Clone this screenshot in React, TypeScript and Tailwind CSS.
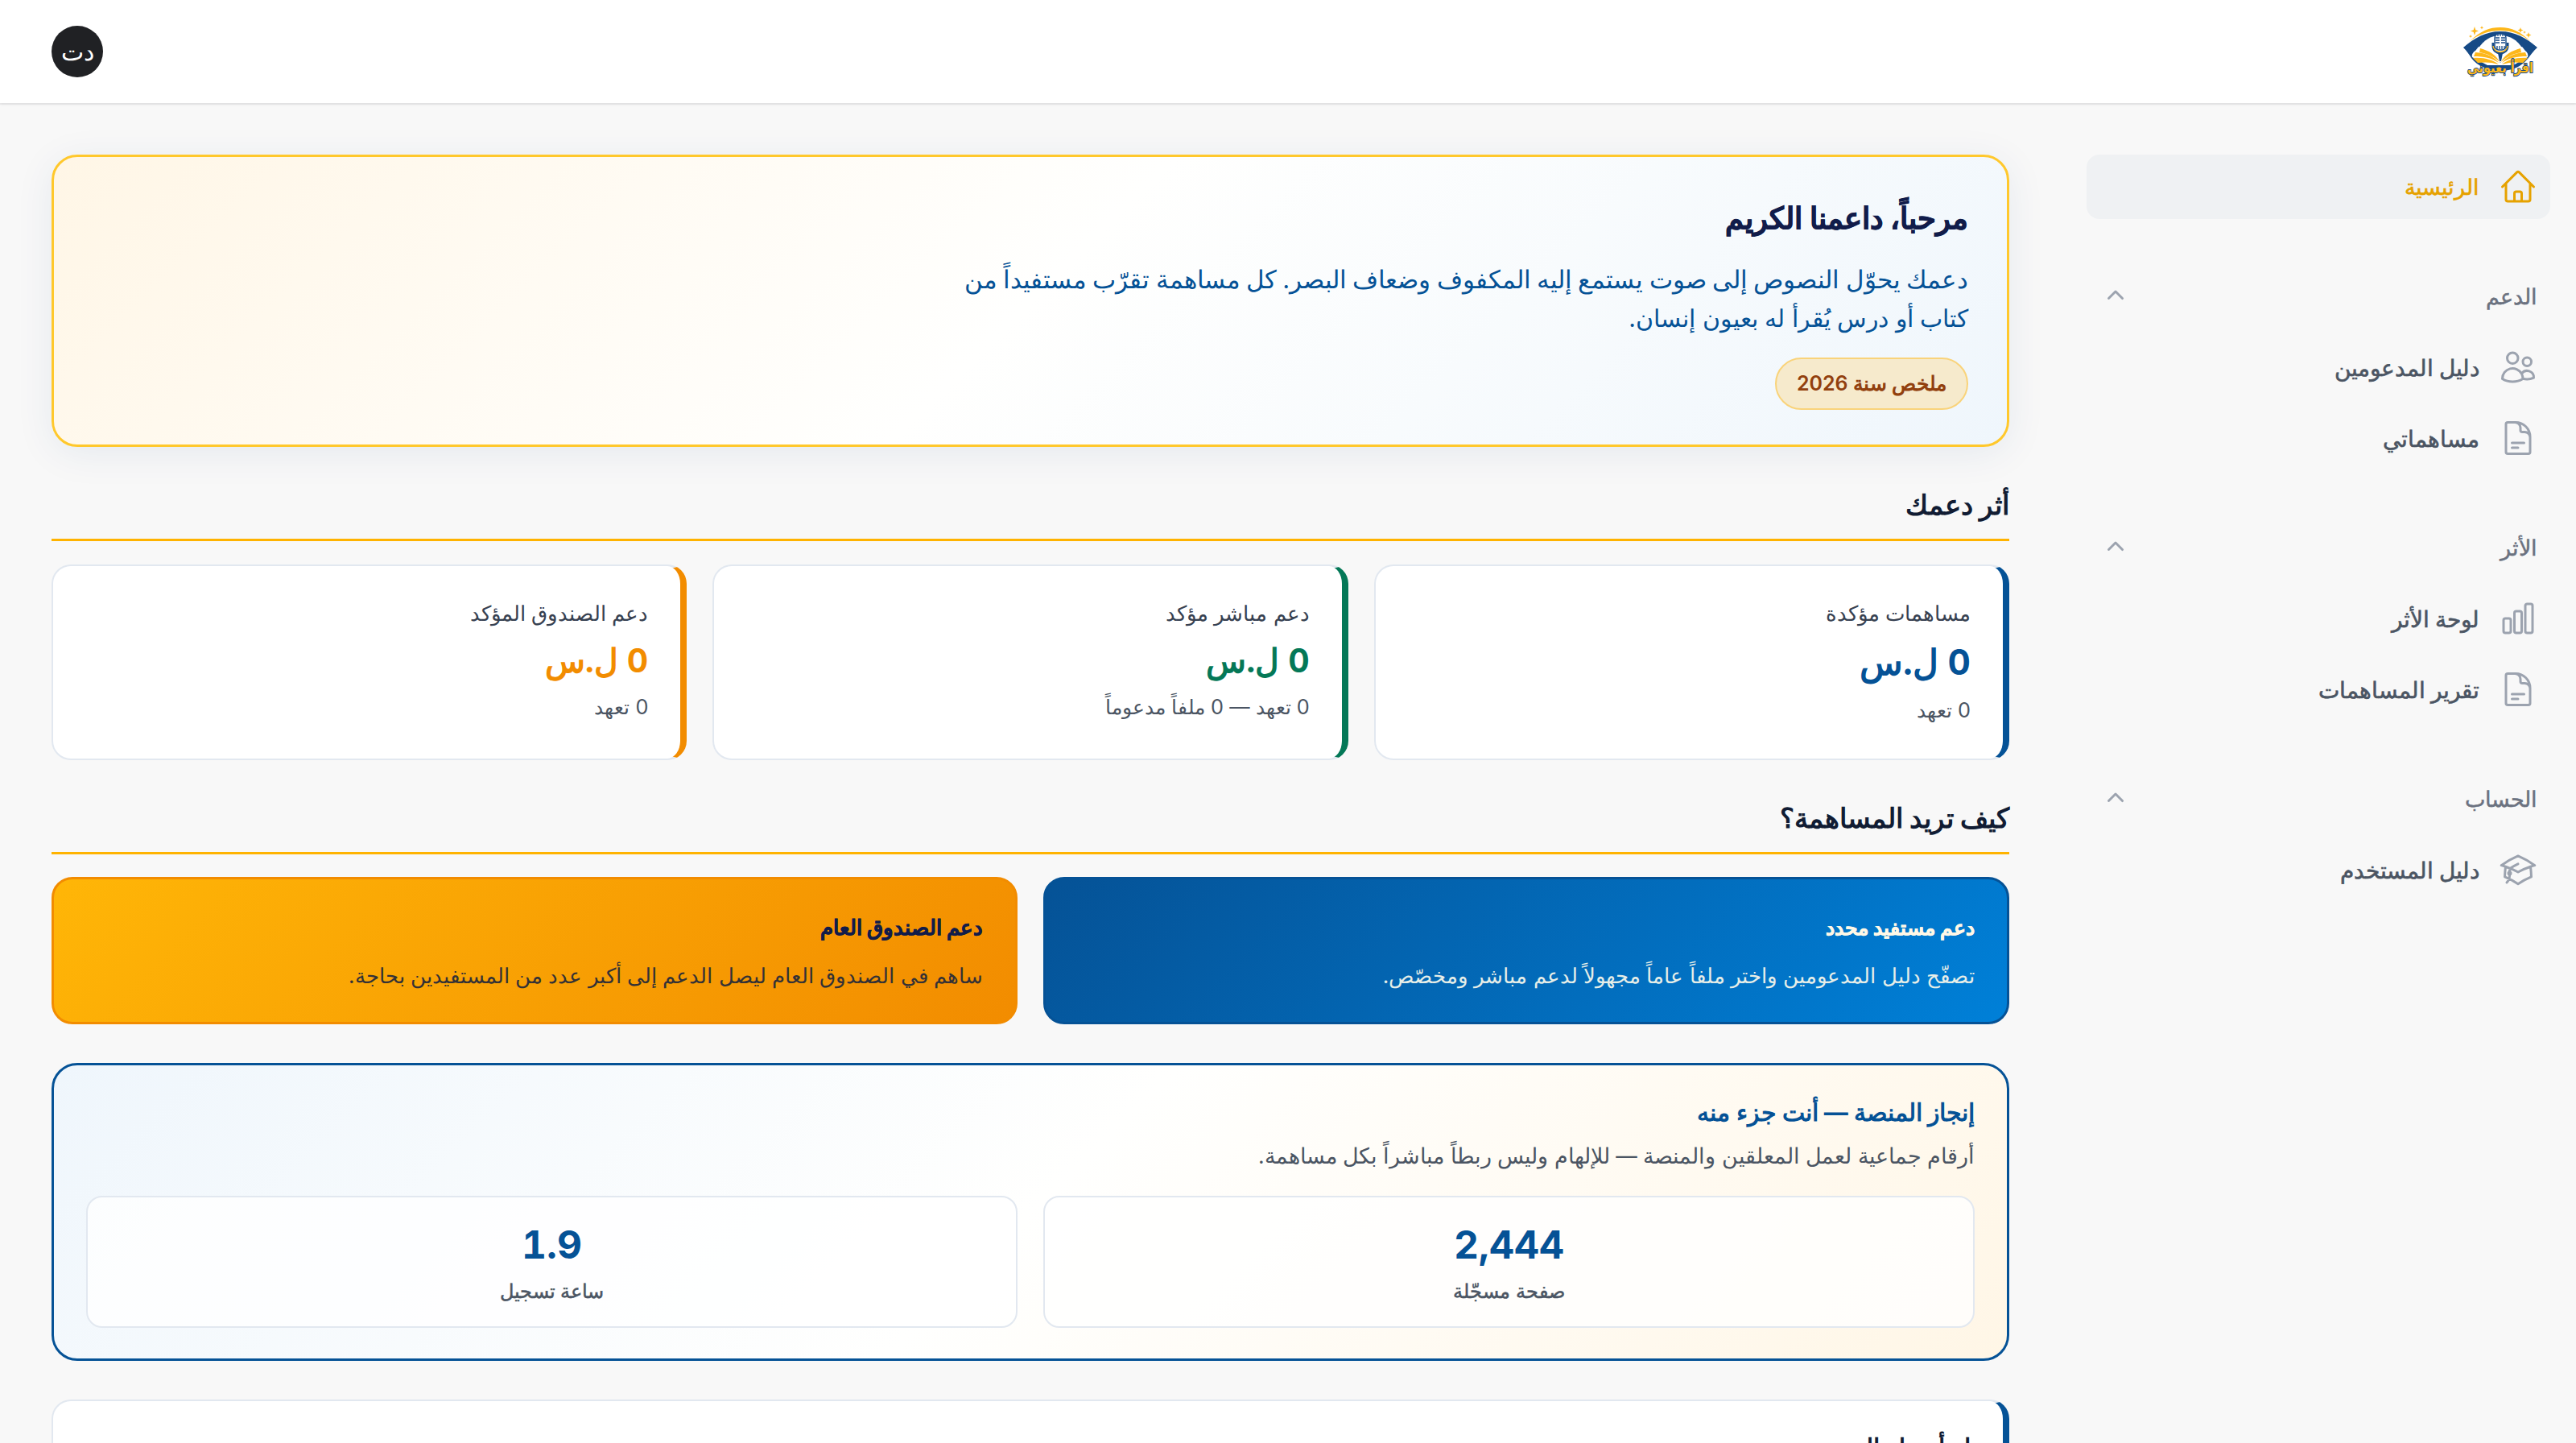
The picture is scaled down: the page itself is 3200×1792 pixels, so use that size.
import clsx from 'clsx';
import type { FC, ReactNode } from 'react';
import type { IconType } from 'react-icons';
import {
	HiMiniChevronUp,
	HiOutlineAcademicCap,
	HiOutlineChartBar,
	HiOutlineDocumentText,
	HiOutlineHome,
	HiOutlineUsers,
} from 'react-icons/hi2';

interface NavItem {
	label: string;
	icon: IconType;
	active?: boolean;
}

interface NavGroup {
	label: string;
	items: NavItem[];
}

const GROUPS: NavGroup[] = [
	{
		label: 'الدعم',
		items: [
			{ label: 'دليل المدعومين', icon: HiOutlineUsers },
			{ label: 'مساهماتي', icon: HiOutlineDocumentText },
		],
	},
	{
		label: 'الأثر',
		items: [
			{ label: 'لوحة الأثر', icon: HiOutlineChartBar },
			{ label: 'تقرير المساهمات', icon: HiOutlineDocumentText },
		],
	},
	{
		label: 'الحساب',
		items: [{ label: 'دليل المستخدم', icon: HiOutlineAcademicCap }],
	},
];

interface Metric {
	label: string;
	value: string;
	note: string;
	border: string;
	color: string;
}

const METRICS: Metric[] = [
	{
		label: 'مساهمات مؤكدة',
		value: '0 ل.س',
		note: '0 تعهد',
		border: 'border-r-[#055296]',
		color: 'text-[#055296] text-[44px] leading-[62px]',
	},
	{
		label: 'دعم مباشر مؤكد',
		value: '0 ل.س',
		note: '0 تعهد — 0 ملفاً مدعوماً',
		border: 'border-r-[#047857]',
		color: 'text-[#047857] text-[41px] leading-[58px]',
	},
	{
		label: 'دعم الصندوق المؤكد',
		value: '0 ل.س',
		note: '0 تعهد',
		border: 'border-r-[#f28c00]',
		color: 'text-[#f28c00] text-[41px] leading-[58px]',
	},
];

const Logo: FC = () => (
	<svg viewBox="0 0 92 64" className="w-[92px] h-16 overflow-visible" aria-label="اقرأ بعيوني">
		<path d="M7 20C22 6 32 2 46 2s25 5 38 18C72 10 60 6 46 6S20 10 7 20Z" fill="#fdb71a" />
		<path d="M0 27C14 15 28 7 46 7s32 8 46 20c-5 4-8 9-12 14-8 10-20 15-34 15S17 50 10 40C7 35 4 31 0 27Z" fill="#164a86" />
		<path d="M18 29C26 17 35 12 46 12s21 5 28 17L62 45H30Z" fill="#fff" />
		<path d="M11 39c-1-4 2-7 4-8l4-5c12 4 22 9 27 20 5-11 15-16 27-20l4 5c3 2 4 5 3 8L62 49H30Z" fill="#fff" />
		<path d="M21 28c11 3 20 8 24 17-7-7-15-10-25-12ZM71 28c-11 3-20 8-24 17 7-7 15-10 25-12Z" fill="#fdb71a" />
		<path d="M15 33c14 1 23 5 29 13-9-6-18-8-31-8ZM77 33c-14 1-23 5-29 13 9-6 18-8 31-8Z" fill="#fdb71a" />
		<path d="M12 40c14-1 24 2 32 8-9-3-18-3-26-2ZM80 40c-14-1-24 2-32 8 9-3 18-3 26-2Z" fill="#fdb71a" />
		<path d="M37 21v4c0 12 18 12 18 0v-4" fill="none" stroke="#164a86" strokeWidth="3" />
		<path d="M37 25c1 10 17 10 18 0" fill="none" stroke="#fdb71a" strokeWidth="1.4" />
		<rect x="39" y="10" width="14" height="20" rx="5" fill="#fff" stroke="#164a86" strokeWidth="1.4" />
		<path d="M40 15h5m2 0h5M40 18h5m2 0h5M40 21h5m2 0h5M42 25v4m3-4v4m3-4v4m3-4v4M43 10v3m3-3v3m3-3v3" stroke="#164a86" strokeWidth="1.3" />
		<path d="M43 34h6l-2 10h-2Z" fill="#164a86" />
		<path d="m14 1 1.3 4.2L19 6.500l-3.700 1.300L14 12l-1.300-4.200L9 6.500l3.700-1.300ZM23 0l.6 1.700 1.700.6-1.700.6L23 4.500l-.6-1.600-1.700-.6 1.700-.6ZM9 11l.6 1.500 1.500.6-1.500.6L9 15l-.6-1.300-1.500-.6 1.500-.6ZM71 2l.9 2.600 2.600.9-2.600.9L71 9l-.9-2.600-2.600-.9 2.600-.9ZM81 8l.9 2.600 2.600.9-2.600.9L81 15l-.9-2.600-2.600-.9 2.600-.9ZM76 6l.5 1.500 1.500.5-1.500.5L76 10l-.5-1.500L74 8l1.500-.5Z" fill="#fdb71a" />
		<text
			x="46"
			y="58"
			textAnchor="middle"
			direction="rtl"
			textLength="82"
			lengthAdjust="spacingAndGlyphs"
			className="font-['DejaVu_Sans'] font-bold text-[17px]"
			fill="#fdb71a"
			stroke="#164a86"
			strokeWidth="2"
			strokeLinejoin="round"
			paintOrder="stroke"
		>
			اقرأ بعيوني
		</text>
	</svg>
);

const NavLink: FC<{ item: NavItem }> = ({ item }) => {
	const Icon = item.icon;
	return (
		<a
			className={clsx('flex items-center gap-6 h-20 px-4 rounded-2xl leading-[48px] font-medium', {
				'bg-[#eff1f3] text-[#e6a200] text-[27px]': item.active,
				'text-[#4b5563] text-[28px]': !item.active,
			})}
		>
			<Icon className={clsx('w-12 h-12 shrink-0', item.active ? 'text-[#e6a200]' : 'text-[#9ca3af]')} />
			<span className="whitespace-nowrap pt-0.5 [-webkit-text-stroke:0.6px]">{item.label}</span>
		</a>
	);
};

const Sidebar: FC = () => (
	<nav className="flex flex-col gap-14 w-[640px] shrink-0 pr-8 pl-8 pt-16">
		<NavLink item={{ label: 'الرئيسية', icon: HiOutlineHome, active: true }} />
		{GROUPS.map((group) => (
			<div key={group.label} className="flex flex-col gap-2">
				<div className="flex items-center justify-between h-20 px-4">
					<span className="pt-0.5 text-[27px] leading-[48px] font-medium text-[#6b7280] [-webkit-text-stroke:0.5px]">{group.label}</span>
					<HiMiniChevronUp className="w-10 h-10 text-[#9ca3af]" />
				</div>
				{group.items.map((item) => (
					<NavLink key={item.label} item={item} />
				))}
			</div>
		))}
	</nav>
);

const SectionTitle: FC<{ children: ReactNode }> = ({ children }) => (
	<h2 className="border-b-[3px] border-[#ffb300] text-[34px] leading-[52px] font-bold text-[#111c33] pb-4">{children}</h2>
);

const Hero: FC = () => (
	<section className="h-[363px] rounded-[32px] border-[3px] border-[#ffc82c] bg-linear-[135deg,#fff6e6_0%,#fffffe_50%,#eff6fc_100%] shadow-[0_8px_48px_rgba(5,60,130,0.08)] px-12 pt-[46px]">
		<h1 className="text-[37px] leading-[60px] font-bold text-[#111c4a] [-webkit-text-stroke:0.7px]">مرحباً، داعمنا الكريم</h1>
		<p className="mt-[22px] text-[30.2px] leading-[48px] text-[#055296]">
			<span className="block whitespace-nowrap text-[31px] [word-spacing:-1.4px]">
				دعمك يحوّل النصوص إلى صوت يستمع إليه المكفوف وضعاف البصر. كل مساهمة تقرّب مستفيداً من
			</span>
			كتاب أو درس يُقرأ له بعيون إنسان.
		</p>
		<span className="mt-[25px] inline-flex items-center justify-center w-60 h-[65px] rounded-full border-2 border-[#f9d37a] bg-[#f6eacc] text-[25px] font-semibold text-[#92400e] whitespace-nowrap">
			ملخص سنة 2026
		</span>
	</section>
);

const MetricCard: FC<{ metric: Metric }> = ({ metric }) => (
	<div className={clsx('h-[243px] rounded-[24px] border-2 border-[#e2e8f0] border-r-8 bg-white px-10 pt-[38px]', metric.border)}>
		<div className="text-[26px] leading-[42px] text-[#374151]">{metric.label}</div>
		<div className={clsx('mt-2 font-bold tabular-nums', metric.color)}>{metric.value}</div>
		<div className="mt-2 text-[25.3px] leading-[42px] text-[#4b5563]">{metric.note}</div>
	</div>
);

const StatBox: FC<{ value: string; label: string }> = ({ value, label }) => (
	<div className="h-[164px] rounded-[20px] border-2 border-[#e2e8f0] bg-white/80 text-center pt-7">
		<div className="text-[48px] leading-[62px] font-bold tabular-nums text-[#055296]">{value}</div>
		<div className="mt-1.5 text-[24px] leading-[42px] font-medium text-[#4b5563] [-webkit-text-stroke:0.5px]">{label}</div>
	</div>
);

export default function App() {
	return (
		<div dir="rtl" className="w-[3200px] h-[1792px] overflow-hidden bg-[#f8f8f8] font-[Inter,sans-serif]">
			<header className="relative flex items-center justify-between h-32 pr-12 pl-16 bg-white shadow-[0_0_0_2px_rgba(3,7,18,0.05),0_2px_4px_rgba(0,0,0,0.05)]">
				<Logo />
				<div className="flex items-center justify-center w-16 h-16 rounded-full bg-[#202124] text-white text-[30px]">دت</div>
			</header>
			<div className="flex">
				<Sidebar />
				<main className="w-[2560px] pt-16 px-16">
					<Hero />
					<div className="mt-[46px]">
						<SectionTitle>أثر دعمك</SectionTitle>
					</div>
					<div className="mt-[29px] grid grid-cols-3 gap-8">
						{METRICS.map((metric) => (
							<MetricCard key={metric.label} metric={metric} />
						))}
					</div>
					<div className="mt-[46px]">
						<SectionTitle>كيف تريد المساهمة؟</SectionTitle>
					</div>
					<div className="mt-[28px] grid grid-cols-2 gap-8">
						<div className="h-[183px] rounded-[26px] border-[3px] border-[#055296] bg-linear-[135deg,#055296,#0080d8] px-10 pt-[36px]">
							<h3 className="text-[25px] leading-[48px] font-bold text-[#fff8e7] [-webkit-text-stroke:0.5px]">دعم مستفيد محدد</h3>
							<p className="mt-3.5 text-[26px] leading-[44px] text-[#e6eee8]">تصفّح دليل المدعومين واختر ملفاً عاماً مجهولاً لدعم مباشر ومخصّص.</p>
						</div>
						<div className="h-[183px] rounded-[26px] border-[3px] border-[#f28c00] bg-linear-[135deg,#ffb607,#f28c00] px-10 pt-[36px]">
							<h3 className="text-[25.6px] leading-[48px] font-bold text-[#111c4a] [-webkit-text-stroke:0.5px]">دعم الصندوق العام</h3>
							<p className="mt-3.5 text-[26px] leading-[44px] text-[#333136]">ساهم في الصندوق العام ليصل الدعم إلى أكبر عدد من المستفيدين بحاجة.</p>
						</div>
					</div>
					<section className="mt-12 h-[370px] rounded-[32px] border-[3px] border-[#055296] bg-linear-[135deg,#eff6fc_0%,#fffffe_50%,#fff6e6_100%] px-10 pt-[33px]">
						<h2 className="text-[30px] leading-[50px] font-bold text-[#055296]">إنجاز المنصة — أنت جزء منه</h2>
						<p className="mt-2 text-[26.5px] leading-[42px] text-[#4b5563]">أرقام جماعية لعمل المعلقين والمنصة — للإلهام وليس ربطاً مباشراً بكل مساهمة.</p>
						<div className="mt-[29px] grid grid-cols-2 gap-8">
							<StatBox value="2,444" label="صفحة مسجّلة" />
							<StatBox value="1.9" label="ساعة تسجيل" />
						</div>
					</section>
					<section className="mt-12 h-[240px] rounded-[24px] border-2 border-[#e2e8f0] border-r-8 border-r-[#055296] bg-white px-10 pt-8">
						<h2 className="text-[30px] leading-[50px] font-bold text-[#111c33]">ابدأ رحلة الدعم</h2>
					</section>
				</main>
			</div>
		</div>
	);
}
